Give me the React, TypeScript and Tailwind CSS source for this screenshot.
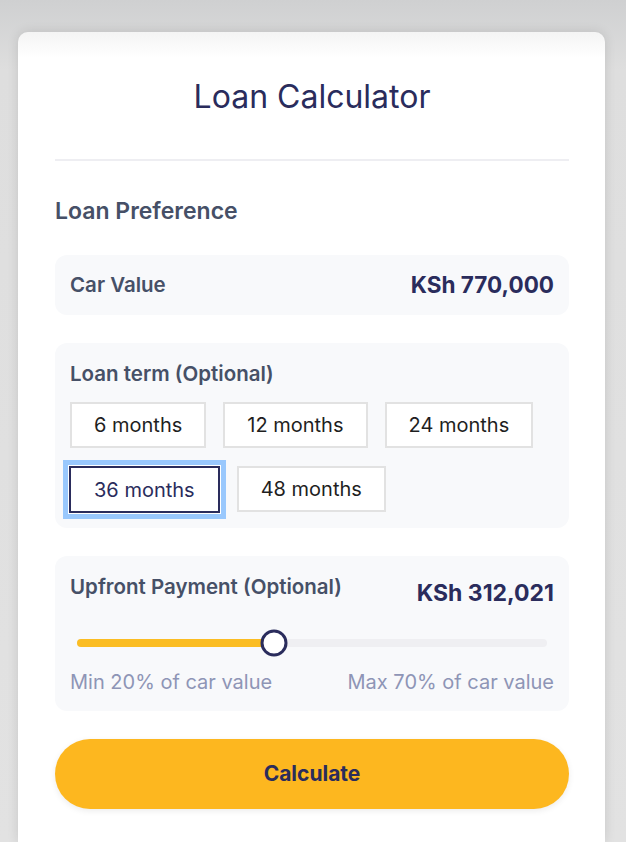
import React, { useState } from "react";

const TERMS = ["6 months", "12 months", "24 months", "36 months", "48 months"];

const App: React.FC = () => {
  const [term, setTerm] = useState("36 months");
  const pct = 42;

  return (
    <div className="min-h-[842px] w-full bg-[linear-gradient(to_bottom,#cfd0d1_0px,#dedede_70px,#e2e2e2_100%)] pl-[18px] pr-[21px] pt-[32px] font-['Inter',sans-serif]">
      <div className="min-h-[810px] rounded-t-[10px] bg-[linear-gradient(to_bottom,#f4f4f4_0px,#ffffff_26px)] pl-[37px] pr-[36px] pt-[45px] shadow-[0_0_12px_rgba(0,0,0,0.12)]">
        <h1 className="text-center text-[32px] font-normal leading-[40px] text-[#2a2c5c]">Loan Calculator</h1>
        <div className="mt-[42px] h-[2px] bg-[#eeeef2]" />

        <h2 className="mt-[36px] text-[23px] font-semibold leading-[28px] text-[#465067]">Loan Preference</h2>

        <div className="mt-[30px] flex h-[60px] items-center justify-between rounded-[12px] bg-[#f8f9fb] px-[15px]">
          <span className="text-[20.5px] font-semibold text-[#465067]">Car Value</span>
          <span className="text-[22.5px] font-bold text-[#2a2c5c]">KSh 770,000</span>
        </div>

        <div className="mt-[28px] rounded-[12px] bg-[#f8f9fb] px-[15px] pb-[15px] pt-[18px]">
          <p className="text-[20.5px] font-semibold leading-[26px] text-[#465067]">Loan term (Optional)</p>
          <div className="mt-[15px] flex flex-wrap gap-x-[17px] gap-y-[18px]">
            {TERMS.map((t) =>
              t === term ? (
                <button
                  key={t}
                  onClick={() => setTerm(t)}
                  className="-ml-[1px] h-[47px] border-2 border-[#2a2c5c] bg-white px-[23px] text-[20px] text-[#2a2c5c] ring-[5px] ring-[#99c8fd] ring-offset-1"
                >
                  {t}
                </button>
              ) : (
                <button
                  key={t}
                  onClick={() => setTerm(t)}
                  className="h-[46px] border-2 border-[#e2e2e2] bg-white px-[22px] text-[20px] text-[#1f1f1f]"
                >
                  {t}
                </button>
              )
            )}
          </div>
        </div>

        <div className="mt-[28px] rounded-[12px] bg-[#f8f9fb] px-[15px] pb-[16px] pt-[18px]">
          <div className="flex items-start justify-between">
            <span className="text-[20.5px] font-semibold leading-[26px] text-[#465067]">Upfront Payment (Optional)</span>
            <span className="mt-[4px] text-[23px] font-bold leading-[30px] text-[#2a2c5c]">KSh 312,021</span>
          </div>
          <div className="relative mx-[7px] mt-[31px] h-[8px] rounded-full bg-[#efeff2]">
            <div className="h-full rounded-full bg-[#fbbd23]" style={{ width: `${pct}%` }} />
            <div
              className="absolute top-1/2 h-[27px] w-[27px] -translate-x-1/2 -translate-y-1/2 rounded-full border-[3px] border-[#2a2c5c] bg-white"
              style={{ left: `${pct}%` }}
            />
          </div>
          <div className="mt-[22px] flex justify-between text-[20px] leading-[26px] text-[#8e95b6]">
            <span>Min 20% of car value</span>
            <span>Max 70% of car value</span>
          </div>
        </div>

        <button className="mt-[28px] h-[70px] w-full rounded-full bg-[#fdb71f] text-[21px] font-bold text-[#2a2c5c] shadow-[0_2px_6px_rgba(0,0,0,0.08)]">
          Calculate
        </button>
      </div>
    </div>
  );
};

export default App;
